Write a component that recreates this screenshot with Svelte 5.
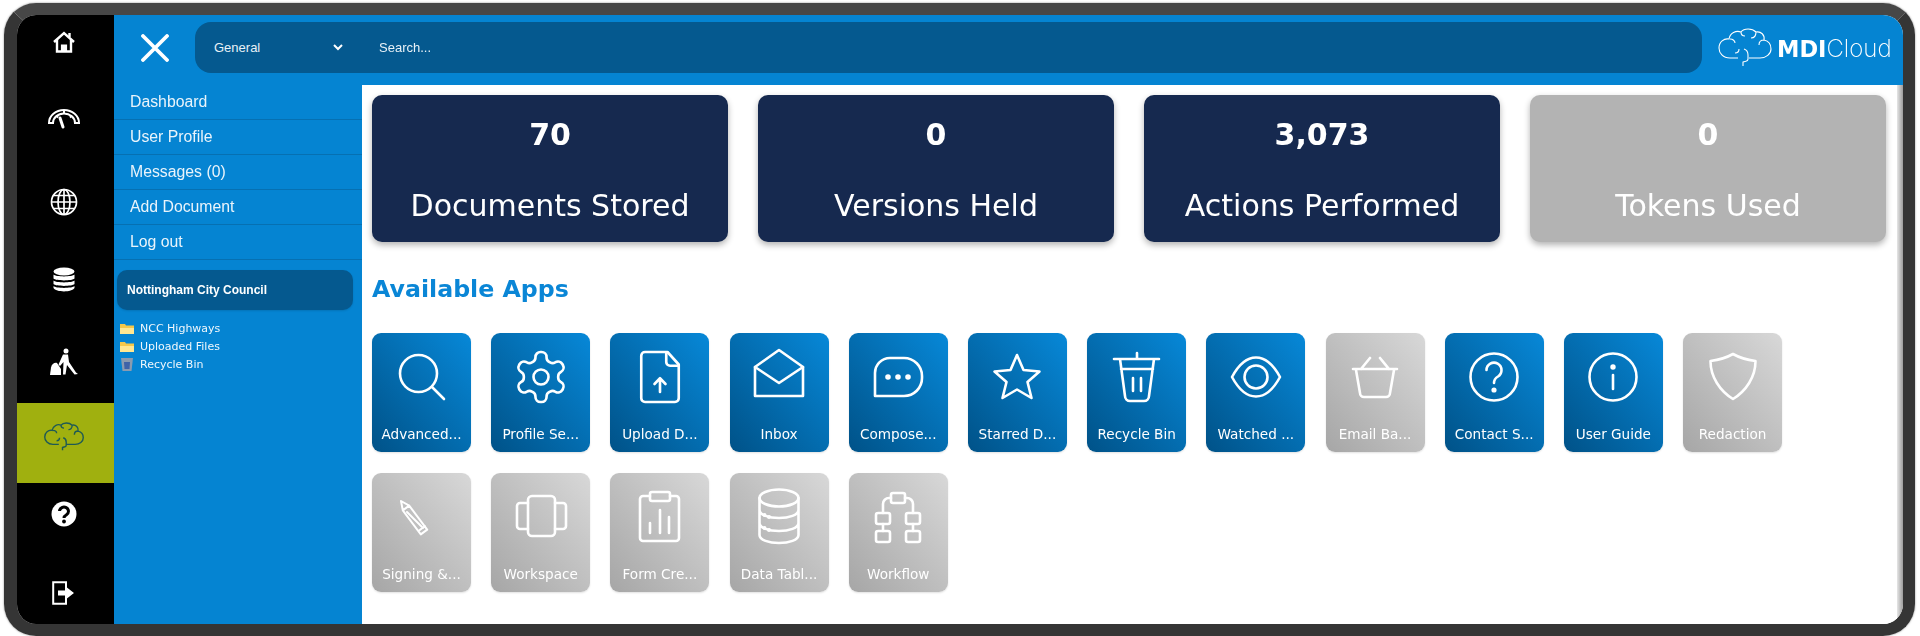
<script>
  const stats = [
    { value: '70', label: 'Documents Stored' },
    { value: '0', label: 'Versions Held' },
    { value: '3,073', label: 'Actions Performed' },
    { value: '0', label: 'Tokens Used', off: true }
  ];
  const menu = ['Dashboard', 'User Profile', 'Messages (0)', 'Add Document', 'Log out'];
  const apps = [
    { id: 'search', label: 'Advanced...' },
    { id: 'gear', label: 'Profile Se...' },
    { id: 'upload', label: 'Upload D...' },
    { id: 'inbox', label: 'Inbox' },
    { id: 'chat', label: 'Compose...' },
    { id: 'star', label: 'Starred D...' },
    { id: 'bin', label: 'Recycle Bin' },
    { id: 'eye', label: 'Watched ...' },
    { id: 'basket', label: 'Email Ba...', off: true },
    { id: 'help', label: 'Contact S...' },
    { id: 'info', label: 'User Guide' },
    { id: 'shield', label: 'Redaction', off: true },
    { id: 'pen', label: 'Signing &...', off: true },
    { id: 'work', label: 'Workspace', off: true },
    { id: 'form', label: 'Form Cre...', off: true },
    { id: 'data', label: 'Data Tabl...', off: true },
    { id: 'flow', label: 'Workflow', off: true }
  ];
  const brain = 'M20 30H12C5 30 1 25 1 20C1 14 6 10 11 11C12 5 18 2 23 4C26 0 34 0 38 4C43 3 47 7 46 12C51 13 53 17 53 21C53 26 48 30 42 30H31M26 21C29 22 30 24 30 27V31C30 34 27 33 25 34V38M12 11C15 11 17 13 17 15M23 4C23 7 25 8 27 8M38 4C38 8 36 10 33 10M46 12C43 12 41 14 41 17M17 25C20 25 21 23 21 21';
</script>

<div class="frame">
  <nav class="rail">
    <div class="rail-item home">
      <svg class="ri" width="22" height="22" viewBox="0 0 22 22" fill="none" stroke="#fff" stroke-width="2.400"><path d="M1 11L11 2L21 11M4 9V20.500H18V9"/><path d="M8.500 20.500V14H13.500V20.500" fill="#fff" stroke-width="1.200"/><path d="M16.500 6V2"/></svg>
    </div>
    <div class="rail-item">
      <svg class="ri" width="32" height="21" viewBox="0 0 32 21" fill="none" stroke="#fff" stroke-width="2"><path d="M1 15A15 13 0 0 1 31 15H27A11 9.500 0 0 0 5 15Z"/><path d="M8 7.500L10 9.500M16 2.500V5M24 7.500L22 9.500"/><path d="M12 10L15 19" stroke-width="3" stroke-linecap="round"/></svg>
    </div>
    <div class="rail-item">
      <svg class="ri" width="28" height="28" viewBox="0 0 28 28" fill="none" stroke="#fff" stroke-width="1.700"><circle cx="14" cy="14" r="12.500"/><ellipse cx="14" cy="14" rx="6" ry="12.500"/><path d="M14 1.500V26.500M1.500 14H26.500M3.500 7.500H24.500M3.500 20.500H24.500"/></svg>
    </div>
    <div class="rail-item db">
      <svg class="ri" width="22" height="25" viewBox="0 0 22 25" fill="#fff"><ellipse cx="11" cy="4.500" rx="10.500" ry="4"/><path d="M.5 7.500C3 10 19 10 21.500 7.500V11.500C19 14 3 14 .5 11.500ZM.5 13.500C3 16 19 16 21.500 13.500V17C19 19.500 3 19.500 .5 17ZM.5 19C3 21.500 19 21.500 21.500 19V21C19 25.500 3 25.500 .5 21Z"/></svg>
    </div>
    <div class="rail-item">
      <svg class="ri" width="28" height="27" viewBox="0 0 28 27" fill="#fff"><circle cx="16" cy="3" r="2.500"/><path d="M13 6.500H18L19 14L26 24.500L28 26L24.500 26.500L17 17L15.500 26.500H13L13.500 14L10 18L8.500 16.500Z"/><path d="M0 27L1 19.500C1.500 16 5 14 7 15L11 21V27Z"/></svg>
    </div>
    <div class="rail-item active">
      <svg class="ri" width="40" height="30" viewBox="0 0 54 40" fill="none" stroke="#1f5a55" stroke-width="1.900"><path d={brain}/></svg>
    </div>
    <div class="rail-item low">
      <svg class="ri" width="26" height="26" viewBox="0 0 26 26"><circle cx="13" cy="13" r="12.500" fill="#fff"/><path d="M8.500 10A4.500 4.200 0 1 1 15.500 13.800C13.500 15 13 15.500 13 17" fill="none" stroke="#000" stroke-width="3"/><circle cx="13" cy="20.500" r="1.900" fill="#000"/></svg>
    </div>
    <div class="rail-item low">
      <svg class="ri" width="23" height="24" viewBox="0 0 23 24" fill="none" stroke="#fff" stroke-width="2"><path d="M14 7V1.200H1.200V22.800H14V17"/><path d="M6 9.500H13V5L22 12L13 19V14.500H6Z" fill="#fff" stroke="none"/></svg>
    </div>
  </nav>

  <div class="main">
    <header class="top">
      <div class="close">
        <svg width="28" height="28" viewBox="0 0 28 28" stroke="#fff" stroke-width="3.800" stroke-linecap="round"><path d="M2 2L26 26M26 2L2 26"/></svg>
      </div>
      <div class="pill">
        <span class="cat">General</span>
        <svg class="chev" width="10" height="7" viewBox="0 0 10 7" fill="none" stroke="#fff" stroke-width="2"><path d="M1 1L5 5L9 1"/></svg>
        <span class="find">Search...</span>
      </div>
      <div class="logo">
        <svg width="54" height="40" viewBox="0 0 54 40" fill="none" stroke="#fff" stroke-width="1.100"><path d={brain}/></svg>
        <span class="brand"><b>MDI</b>Cloud</span>
      </div>
    </header>

    <div class="body">
      <aside class="side">
        <ul class="menu">
          {#each menu as item}
            <li>{item}</li>
          {/each}
        </ul>
        <div class="org">Nottingham City Council</div>
        <ul class="tree">
          <li><svg width="14" height="11" viewBox="0 0 14 11"><path d="M0 1H5L6 2.500H14V11H0Z" fill="#f5c84a"/><path d="M0 5H14V11H0Z" fill="#ffe792"/></svg>NCC Highways</li>
          <li><svg width="14" height="11" viewBox="0 0 14 11"><path d="M0 1H5L6 2.500H14V11H0Z" fill="#f5c84a"/><path d="M0 5H14V11H0Z" fill="#ffe792"/></svg>Uploaded Files</li>
          <li><svg width="14" height="14" viewBox="0 0 14 14"><path d="M1 1H13L11.500 14H2.500Z" fill="#8a9bb0"/><path d="M4 5H10L9.500 12H4.500Z" fill="#3f63a8"/></svg>Recycle Bin</li>
        </ul>
      </aside>

      <section class="content">
        <div class="stats">
          {#each stats as s}
            <div class="stat" class:off={s.off}>
              <div class="num">{s.value}</div>
              <div class="lbl">{s.label}</div>
            </div>
          {/each}
        </div>
        <h2>Available Apps</h2>
        <div class="apps">
          {#each apps as a}
            <div class="tile" class:off={a.off}>
              <svg class="ico" width="50" height="50" viewBox={a.id === 'gear' || a.id === 'upload' ? '2 2 20 20' : '0 0 50 50'} fill="none" stroke="#fff" stroke-width={a.id === 'gear' || a.id === 'upload' ? 1.05 : 2.6} stroke-linecap="round" stroke-linejoin="round">
                {#if a.id === 'search'}
                  <circle cx="21.500" cy="21.500" r="18.500"/><path d="M35 35L47 47"/>
                {:else if a.id === 'gear'}
                  <path d="M12.220 2h-.44a2 2 0 0 0-2 2v.18a2 2 0 0 1-1 1.730l-.43.25a2 2 0 0 1-2 0l-.15-.08a2 2 0 0 0-2.730.73l-.22.38a2 2 0 0 0 .73 2.730l.15.1a2 2 0 0 1 1 1.720v.51a2 2 0 0 1-1 1.740l-.15.09a2 2 0 0 0-.73 2.730l.22.38a2 2 0 0 0 2.730.73l.15-.08a2 2 0 0 1 2 0l.43.25a2 2 0 0 1 1 1.730V20a2 2 0 0 0 2 2h.44a2 2 0 0 0 2-2v-.18a2 2 0 0 1 1-1.730l.43-.25a2 2 0 0 1 2 0l.15.08a2 2 0 0 0 2.730-.73l.22-.39a2 2 0 0 0-.73-2.730l-.15-.08a2 2 0 0 1-1-1.740v-.5a2 2 0 0 1 1-1.740l.15-.09a2 2 0 0 0 .73-2.730l-.22-.38a2 2 0 0 0-2.730-.73l-.15.08a2 2 0 0 1-2 0l-.43-.25a2 2 0 0 1-1-1.730V4a2 2 0 0 0-2-2z"/><circle cx="12" cy="12" r="3"/>
                {:else if a.id === 'upload'}
                  <path d="M15 2H6a1.500 1.500 0 0 0-1.500 1.500v17A1.500 1.500 0 0 0 6 22h12a1.500 1.500 0 0 0 1.500-1.500V7Z"/><path d="M14.500 2.200V6a1.500 1.500 0 0 0 1.500 1.500h3.500"/><path d="M12 18v-5M9.800 14.800L12 12.500l2.200 2.300"/>
                {:else if a.id === 'inbox'}
                  <path d="M1 15L25 -2L49 15V44H1Z"/><path d="M1 15L25 31L49 15"/>
                {:else if a.id === 'chat'}
                  <path d="M2 44V21A15 15 0 0 1 17 6H31A18 18 0 0 1 49 24V26A18 18 0 0 1 31 44Z"/><circle cx="15" cy="25" r="1.500" fill="#fff"/><circle cx="25" cy="25" r="1.500" fill="#fff"/><circle cx="35" cy="25" r="1.500" fill="#fff"/>
                {:else if a.id === 'star'}
                  <path d="M25 3L31.500 18L47.500 19.500L35.500 30L39.500 46L25 37.500L10.500 46L14.500 30L2.500 19.500L18.500 18Z"/>
                {:else if a.id === 'bin'}
                  <path d="M25 1V7M2 7H47M8 7L13 44A5 5 0 0 0 18 49H32A5 5 0 0 0 37 44L42 7M9 17H41M21 26V39M29 26V39"/>
                {:else if a.id === 'eye'}
                  <path d="M1 25C8 12 16 5.500 25 5.500S42 12 49 25C42 38 34 44.500 25 44.500S8 38 1 25Z"/><circle cx="25" cy="25" r="11.500"/>
                {:else if a.id === 'basket'}
                  <path d="M11 17L20 6M39 17L30 6M3 17H47M6 18L10 41A4 4 0 0 0 14 45H36A4 4 0 0 0 40 41L44 18"/>
                {:else if a.id === 'help'}
                  <circle cx="25" cy="25" r="23.500"/><path d="M17.500 18A7.500 7.500 0 1 1 29 24.500C26.500 26 25 27.500 25 31"/><circle cx="25" cy="38" r="1.300" fill="#fff"/>
                {:else if a.id === 'info'}
                  <circle cx="25" cy="25" r="23.500"/><circle cx="25" cy="15" r="1.400" fill="#fff"/><path d="M25 23V37"/>
                {:else if a.id === 'shield'}
                  <path d="M25 2C32 6 40 8 47.500 9C47.500 25 38 39 25 47C12 39 2.500 25 2.500 9C10 8 18 6 25 2Z"/>
                {:else if a.id === 'pen'}
                  <path stroke-width="2" d="M4 9L12.200 13.600L30.200 37.600L23.800 42.400L5.800 18.400ZM5.800 18.400L12.200 13.600M10 20L26 36M21.500 39L28 34"/>
                {:else if a.id === 'work'}
                  <rect x="12" y="4" width="27" height="40" rx="4"/><path d="M12 11H4A3 3 0 0 0 1 14V34A3 3 0 0 0 4 37H12M39 11H47A3 3 0 0 1 50 14V34A3 3 0 0 1 47 37H39"/>
                {:else if a.id === 'form'}
                  <path d="M15 4H8A3 3 0 0 0 5 7V46A3 3 0 0 0 8 49H41A3 3 0 0 0 44 46V7A3 3 0 0 0 41 4H35"/><rect x="15" y="0" width="20" height="9" rx="2"/><path d="M15 41V31M25 41V18M34 41V25"/>
                {:else if a.id === 'data'}
                  <ellipse cx="25" cy="6" rx="19.500" ry="8.500"/><path d="M5.500 6V43C5.500 48 15 51 25 51S44.500 48 44.500 43V6M5.500 18C5.500 23 15 26 25 26S44.500 23 44.500 18M5.500 31C5.500 36 15 39 25 39S44.500 36 44.500 31"/><circle cx="10.500" cy="23" r=".7" fill="#fff"/><circle cx="15" cy="25" r=".7" fill="#fff"/><circle cx="10.500" cy="36" r=".7" fill="#fff"/><circle cx="15" cy="38" r=".7" fill="#fff"/>
                {:else if a.id === 'flow'}
                  <rect x="18" y="1" width="14" height="10" rx="2"/><rect x="3" y="21" width="14" height="11" rx="2"/><rect x="33" y="21" width="14" height="11" rx="2"/><rect x="3" y="39" width="14" height="11" rx="2"/><rect x="33" y="39" width="14" height="11" rx="2"/><path d="M18 6H16A6 6 0 0 0 10 12V21M32 6H34A6 6 0 0 1 40 12V21M10 32V39M40 32V39"/>
                {/if}
              </svg>
              <span class="name">{a.label}</span>
            </div>
          {/each}
        </div>
      </section>
      <div class="strip"></div>
    </div>
  </div>
</div>

<style>
  :global(body) { margin: 0; background: #fff; }
  .frame {
    box-sizing: border-box;
    width: 1911px;
    height: 633px;
    margin: 3px 5px 0 4px;
    border: solid #353535;
    border-top-color: #474747;
    border-width: 12px 12px 12px 13px;
    border-radius: 32px;
    display: flex;
    overflow: hidden;
    box-shadow: 0 0 2px rgba(0, 0, 0, .5);
    font-family: "Liberation Sans", Arial, sans-serif;
    filter: blur(.45px);
  }
  .rail {
    width: 97px;
    flex: none;
    background: #000;
    display: flex;
    flex-direction: column;
    overflow: hidden;
  }
  .rail-item {
    flex: none;
    height: 80px;
    display: flex;
    justify-content: center;
    align-items: flex-start;
    padding: 25px 4px 0 0;
    box-sizing: border-box;
  }
  .rail-item.home { height: 68px; padding-top: 16px; }
  .rail-item.db { padding-top: 24px; }
  .rail-item.active { background: #a0b00f; padding-top: 19px; }
  .rail-item.low { padding-top: 18px; }
  .main { flex: 1; min-width: 0; display: flex; flex-direction: column; }
  .top {
    height: 70px;
    flex: none;
    background: #0584d2;
    display: flex;
    align-items: flex-start;
  }
  .close {
    width: 81px;
    height: 65px;
    flex: none;
    display: flex;
    align-items: center;
    justify-content: center;
  }
  .pill {
    flex: 1;
    height: 51px;
    margin-top: 7px;
    background: #05598f;
    border-radius: 16px;
    display: flex;
    align-items: center;
    color: #e8f1f7;
    font-size: 13px;
  }
  .cat { margin-left: 19px; width: 119px; }
  .chev { flex: none; }
  .find { margin-left: 36px; }
  .logo {
    width: 201px;
    flex: none;
    display: flex;
    align-items: flex-start;
    padding: 13px 0 0 16px;
    box-sizing: border-box;
    color: #fff;
  }
  .brand {
    font-family: Inter, sans-serif;
    font-size: 24px;
    font-weight: 200;
    line-height: 28px;
    margin: 7px 0 0 5px;
  }
  .brand b {
    font-family: "DejaVu Sans", sans-serif;
    font-size: 22.500px;
    font-weight: 700;
  }
  .body { flex: 1; display: flex; min-height: 0; }
  .side {
    width: 248px;
    flex: none;
    background: #0584d2;
    color: #fff;
    display: flex;
    flex-direction: column;
  }
  ul { list-style: none; margin: 0; padding: 0; }
  .menu li {
    height: 35px;
    box-sizing: border-box;
    padding-left: 16px;
    line-height: 34px;
    font-size: 15.800px;
    color: #eaf4fb;
    border-bottom: 1px solid #0670b2;
  }
  .org {
    margin: 10px 9px 0 3px;
    height: 40px;
    background: #05598f;
    border-radius: 10px;
    line-height: 40px;
    padding-left: 10px;
    font-size: 12px;
    font-weight: 700;
    box-shadow: 0 1px 2px rgba(0, 0, 0, .12);
  }
  .tree {
    margin: 10px 0 0 6px;
    font-family: "DejaVu Sans", Verdana, sans-serif;
    font-size: 11px;
    color: #f0f7fc;
  }
  .tree li { height: 17.700px; display: flex; align-items: center; gap: 6px; }
  .tree svg { flex: none; }
  .content {
    flex: 1;
    min-width: 0;
    background: #fff;
    padding: 10px 0 0 10px;
    font-family: "DejaVu Sans", Verdana, sans-serif;
  }
  .stats { display: flex; gap: 30px; }
  .stat {
    width: 356px;
    height: 147px;
    background: #16294f;
    border-radius: 10px;
    box-shadow: 0 3px 6px rgba(0, 0, 0, .3);
    color: #fff;
    text-align: center;
    box-sizing: border-box;
    padding-top: 22px;
  }
  .stat.off { background: #b3b3b3; }
  .num { font-size: 30px; font-weight: 700; line-height: 36px; }
  .lbl { font-size: 30px; line-height: 36px; margin-top: 35px; }
  h2 {
    margin: 33px 0 0;
    font-size: 23.700px;
    line-height: 28px;
    font-weight: 700;
    color: #0a86d6;
  }
  .apps {
    display: flex;
    flex-wrap: wrap;
    gap: 21px 20.200px;
    margin-top: 30px;
    width: 1500px;
  }
  .tile {
    width: 99px;
    height: 119px;
    border-radius: 9px;
    background: linear-gradient(to top right, #005288, #0788d8);
    color: #fff;
    position: relative;
    display: flex;
    flex-direction: column;
    align-items: center;
    box-sizing: border-box;
    padding-top: 19px;
    box-shadow: 0 1px 2px rgba(0, 0, 0, .12);
  }
  .tile.off { background: linear-gradient(to top right, #a6a6a6, #d8d8d8); }
  .ico { overflow: visible; flex: none; }
  .name {
    margin-top: 23px;
    font-size: 13.600px;
    line-height: 18px;
    white-space: nowrap;
  }
  .strip {
    width: 6px;
    flex: none;
    background: linear-gradient(to right, #e6e6e6, #9c9c9c);
  }
</style>
